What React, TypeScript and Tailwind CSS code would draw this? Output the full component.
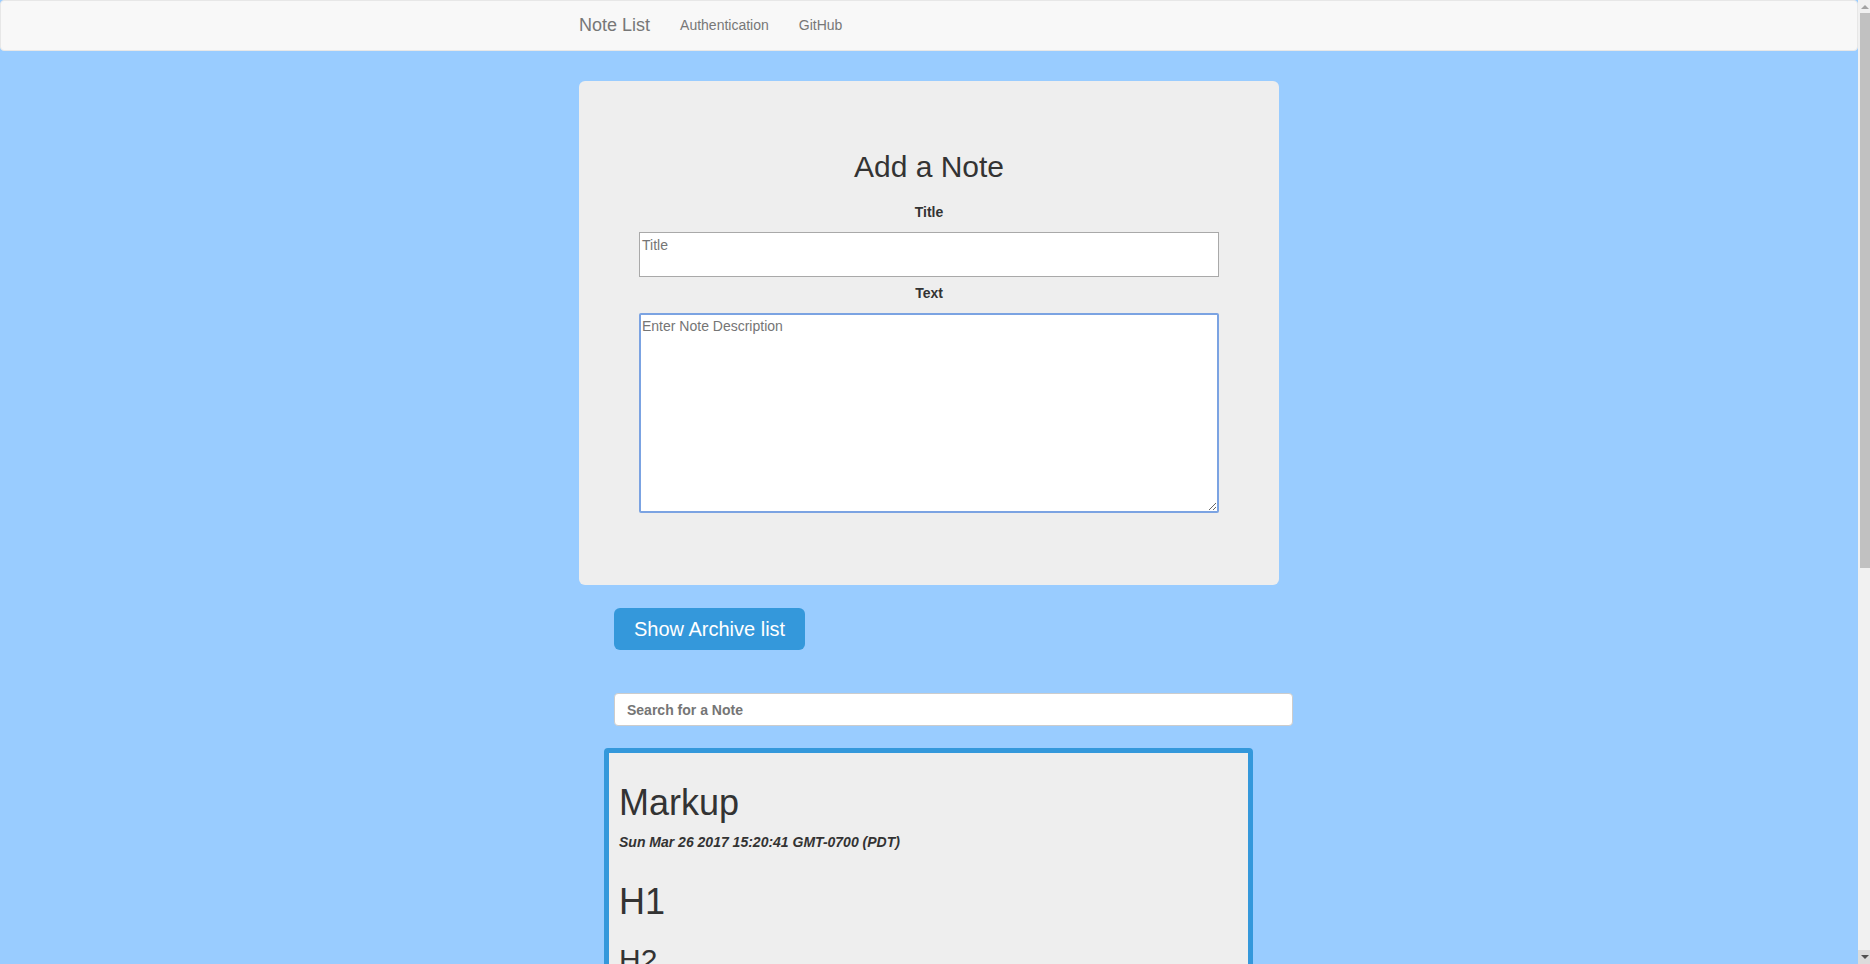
import React from 'react';

const font = { fontFamily: '"Liberation Sans", Arial, sans-serif' };

function Navbar() {
  return (
    <nav className="h-[51px] bg-[#f8f8f8] border border-[#e7e7e7] rounded-[4px] shrink-0">
      <div className="w-[700px] mx-auto h-full flex items-center pb-[2px]">
        <a href="#" className="text-[18px] leading-[20px] text-[#777] pt-[1px]">Note List</a>
        <a href="#" className="ml-[30px] text-[14px] leading-[20px] text-[#777]">Authentication</a>
        <a href="#" className="ml-[30px] text-[14px] leading-[20px] text-[#777]">GitHub</a>
      </div>
    </nav>
  );
}

function AddNote() {
  return (
    <div className="bg-[#eee] rounded-[6px] pt-[69px] pb-[72px] px-[60px] mt-[30px]">
      <h2 className="text-center text-[30px] leading-[33px] text-[#333]">Add a Note</h2>
      <label className="block text-center font-bold text-[14px] leading-[20px] text-[#333] mt-[19px]">Title</label>
      <textarea
        rows={1}
        placeholder="Title"
        className="block w-full h-[45px] mt-[10px] bg-white border border-[#a9a9a9] pl-[2px] pt-[2px] text-[14px] resize-none outline-none placeholder:text-[#757575]"
      />
      <label className="block text-center font-bold text-[14px] leading-[20px] text-[#333] mt-[6px]">Text</label>
      <textarea
        placeholder="Enter Note Description"
        className="block w-full h-[200px] mt-[10px] bg-white border-2 border-[#7ba3e2] rounded-[2px] pl-[1px] pt-[1px] text-[14px] outline-none placeholder:text-[#757575]"
      />
    </div>
  );
}

function NoteCard() {
  return (
    <div className="ml-[25px] w-[649px] mt-[22px] bg-[#eee] border-[5px] border-[#3498db] rounded-[4px] px-[10px] pb-10 text-[#333]">
      <h1 className="text-[36px] leading-[40px] mt-[30px]">Markup</h1>
      <h5 className="text-[14px] leading-[15px] font-bold italic mt-[12px]">Sun Mar 26 2017 15:20:41 GMT-0700 (PDT)</h5>
      <h1 className="text-[36px] leading-[40px] mt-[32px]">H1</h1>
      <h2 className="text-[30px] leading-[33px] mt-[21px]">H2</h2>
      <h3 className="text-[24px] leading-[27px] mt-[20px]">H3</h3>
    </div>
  );
}

function Scrollbar() {
  return (
    <div className="w-[12px] h-full bg-[#f1f1f1] flex flex-col shrink-0">
      <div className="h-[13px] flex items-center justify-center">
        <div className="w-0 h-0 border-l-[4px] border-r-[4px] border-b-[4px] border-l-transparent border-r-transparent border-b-[#a3a3a3] ml-[2px]" />
      </div>
      <div className="ml-[2px] h-[555px] bg-[#c1c1c1]" />
      <div className="flex-1" />
      <div className="h-[14px] bg-[#dcdcdc] flex items-center justify-center">
        <div className="w-0 h-0 border-l-[4px] border-r-[4px] border-t-[4px] border-l-transparent border-r-transparent border-t-[#505050] ml-[2px]" />
      </div>
    </div>
  );
}

export default function App() {
  return (
    <div className="h-screen w-full flex overflow-hidden bg-[#99ccff]" style={font}>
      <div className="flex-1 flex flex-col overflow-hidden">
        <Navbar />
        <main className="w-[700px] mx-auto">
          <AddNote />
          <button className="ml-[35px] mt-[23px] h-[42px] px-[20px] rounded-[6px] bg-[#3498db] text-white text-[20px]">
            Show Archive list
          </button>
          <input
            placeholder="Search for a Note"
            className="block ml-[35px] w-[679px] h-[33px] mt-[43px] bg-white border border-[#ccc] rounded-[4px] pl-[12px] text-[14px] font-bold outline-none placeholder:text-[#757575]"
          />
          <NoteCard />
        </main>
      </div>
      <Scrollbar />
    </div>
  );
}
